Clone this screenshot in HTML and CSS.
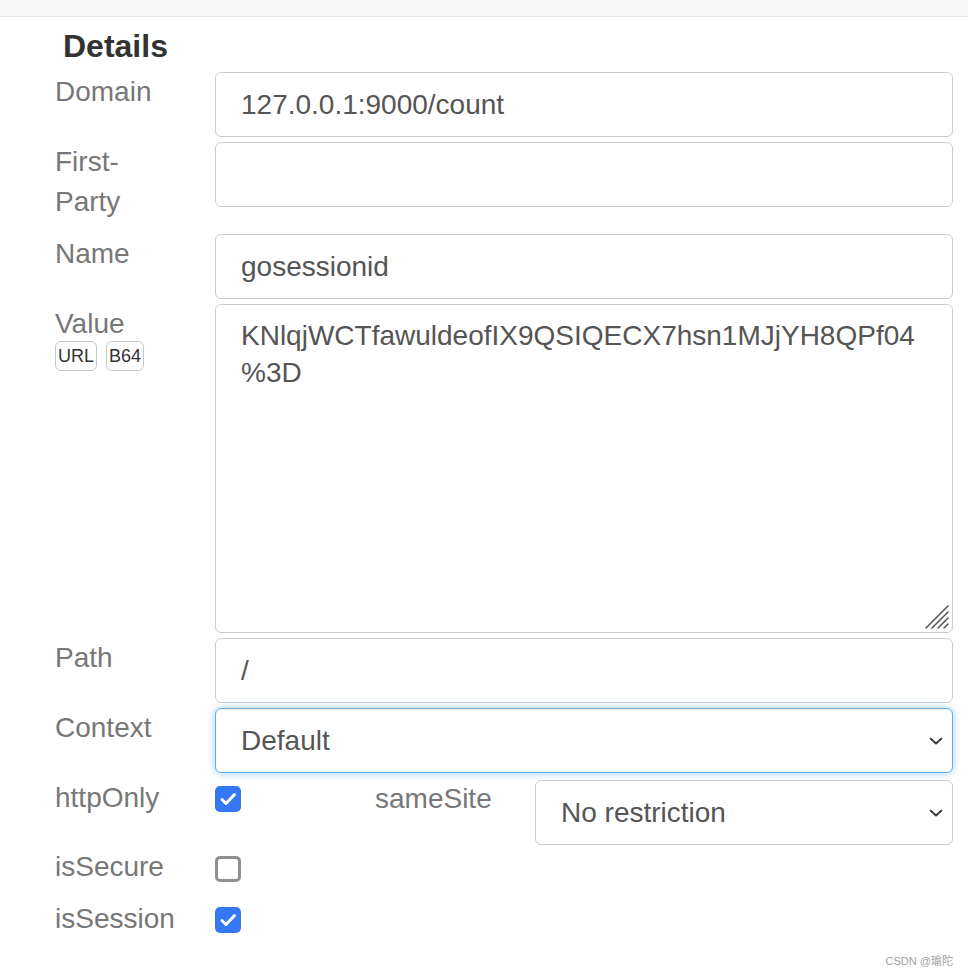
FILE: index.html
```html
<!DOCTYPE html>
<html>
<head>
<meta charset="utf-8">
<link rel="stylesheet" href="styles.css">
</head>
<body>
<div class="topbar"></div>
<h2 class="title">Details</h2>
<div class="form">
  <div class="row">
    <div class="lbl">Domain</div>
    <div class="ctl"><input class="field" type="text" value="127.0.0.1:9000/count"></div>
  </div>
  <div class="row">
    <div class="lbl">First-Party</div>
    <div class="ctl"><input class="field" type="text" value=""></div>
  </div>
  <div class="row">
    <div class="lbl">Name</div>
    <div class="ctl"><input class="field" type="text" value="gosessionid"></div>
  </div>
  <div class="row">
    <div class="lbl lbl-value">
      <div>Value</div>
      <div class="enc">
        <span class="encbtn">URL</span>
        <span class="encbtn">B64</span>
      </div>
    </div>
    <div class="ctl ta-wrap">
      <textarea class="field area">KNlqjWCTfawuldeofIX9QSIQECX7hsn1MJjYH8QPf04
%3D</textarea>
      <svg class="grip" width="26" height="26" viewBox="0 0 26 26">
        <g stroke="#555" stroke-width="1.6" stroke-linecap="round">
          <line x1="2" y1="24" x2="24" y2="2"/>
          <line x1="8" y1="24" x2="24" y2="8"/>
          <line x1="14" y1="24" x2="24" y2="14"/>
          <line x1="20" y1="24" x2="24" y2="20"/>
        </g>
      </svg>
    </div>
  </div>
  <div class="row">
    <div class="lbl">Path</div>
    <div class="ctl"><input class="field" type="text" value="/"></div>
  </div>
  <div class="row">
    <div class="lbl">Context</div>
    <div class="ctl sel-wrap">
      <select class="field sel focus"><option>Default</option></select>
      <svg class="chev" width="14" height="8" viewBox="0 0 14 8"><path d="M1.5 1.5 L7 6.5 L12.5 1.5" fill="none" stroke="#333" stroke-width="1.8" stroke-linecap="round" stroke-linejoin="round"/></svg>
    </div>
  </div>
  <div class="row row-http">
    <div class="lbl">httpOnly</div>
    <div class="cbcell">
      <span class="cb on"><svg width="26" height="26" viewBox="0 0 26 26"><path d="M7 13.5 L11 17.5 L19.5 8.5" fill="none" stroke="#fff" stroke-width="3" stroke-linecap="round" stroke-linejoin="round"/></svg></span>
    </div>
    <div class="lbl lbl-same">sameSite</div>
    <div class="ctl sel-wrap same">
      <select class="field sel"><option>No restriction</option></select>
      <svg class="chev" width="14" height="8" viewBox="0 0 14 8"><path d="M1.5 1.5 L7 6.5 L12.5 1.5" fill="none" stroke="#333" stroke-width="1.8" stroke-linecap="round" stroke-linejoin="round"/></svg>
    </div>
  </div>
  <div class="row">
    <div class="lbl">isSecure</div>
    <div class="cbcell cb-secure">
      <span class="cb off"></span>
    </div>
  </div>
  <div class="row">
    <div class="lbl">isSession</div>
    <div class="cbcell">
      <span class="cb on"><svg width="26" height="26" viewBox="0 0 26 26"><path d="M7 13.5 L11 17.5 L19.5 8.5" fill="none" stroke="#fff" stroke-width="3" stroke-linecap="round" stroke-linejoin="round"/></svg></span>
    </div>
  </div>
</div>
<div class="mark">CSDN @瑜陀</div>
</body>
</html>
```

FILE: styles.css
```css
html, body {
  margin: 0;
  padding: 0;
  background: #fff;
}
body {
  font-family: "Liberation Sans", Arial, "Noto Sans CJK SC", sans-serif;
  position: relative;
  min-height: 976px;
}
.topbar {
  height: 16px;
  background: #f7f7f7;
  border-bottom: 1px solid #e2e2e2;
}
.title {
  margin: 9px 0 6px 0;
  padding-left: 63px;
  font-size: 32px;
  line-height: 40px;
  font-weight: bold;
  color: #333;
}
.form {
  padding: 0 15px 0 55px;
}
.row {
  display: flex;
  margin-bottom: 5px;
}
.lbl {
  flex: none;
  width: 124px;
  padding-right: 36px;
  padding-bottom: 7px;
  font-size: 28px;
  line-height: 40px;
  color: #777;
}
.ctl {
  flex: 1;
  min-width: 0;
}
.field {
  display: block;
  width: 100%;
  height: 65px;
  box-sizing: border-box;
  margin: 0;
  border: 1px solid #ccc;
  border-radius: 6px;
  padding: 0 25px;
  font-family: "Liberation Sans", Arial, sans-serif;
  font-size: 28px;
  color: #555;
  background: #fff;
  outline: none;
}
.enc {
  display: flex;
  gap: 9px;
  margin-top: -3px;
}
.encbtn {
  display: inline-block;
  height: 30px;
  box-sizing: border-box;
  padding: 0 2px;
  border: 1px solid #c8c8c8;
  border-radius: 6px;
  font-size: 18px;
  line-height: 28px;
  color: #333;
}
.ta-wrap {
  position: relative;
}
.area {
  height: 329px;
  padding: 12px 25px;
  line-height: 37px;
  resize: none;
  overflow: hidden;
  white-space: pre-wrap;
}
.grip {
  position: absolute;
  right: 3px;
  bottom: 3px;
}
.sel-wrap {
  position: relative;
}
.sel {
  appearance: none;
  -webkit-appearance: none;
}
.sel.focus {
  border-color: #66afe9;
  box-shadow: inset 0 1px 1px rgba(0,0,0,.075), 0 0 8px rgba(102,175,233,.6);
}
.chev {
  position: absolute;
  right: 10px;
  top: 29px;
}
.row-http {
  margin-bottom: 2px;
}
.cbcell {
  flex: none;
  width: 160px;
  padding-top: 8px;
}
.cb-secure {
  padding-top: 9px;
}
.cb {
  display: block;
  width: 26px;
  height: 26px;
  box-sizing: border-box;
  border-radius: 5px;
}
.cb svg {
  display: block;
}
.cb.on {
  background: #3478f6;
}
.cb.off {
  border: 3px solid #8e8e93;
  background: #fff;
}
.lbl-same {
  margin-top: 1px;
}
.same {
  margin-top: 2px;
}
.mark {
  position: absolute;
  right: 15px;
  bottom: 8px;
  font-size: 11px;
  color: #a0a0a0;
}
```
